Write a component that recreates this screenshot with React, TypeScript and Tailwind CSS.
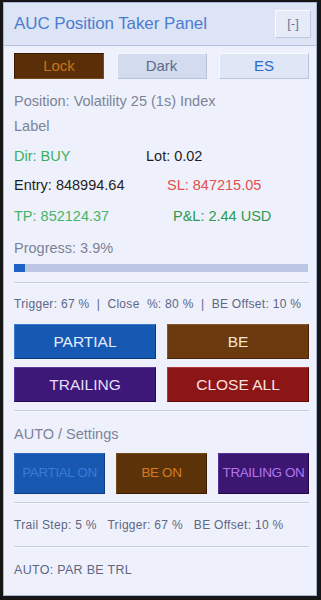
import React from "react";

const font = { fontFamily: '"Liberation Sans", Arial, sans-serif' };

function Sep() {
  return <div className="h-[2px] bg-[#c3cbe2] border-b border-[#f6f8fe]" />;
}

export default function App() {
  return (
    <div className="w-[321px] h-[600px] bg-[#161616] pt-[2px] pl-[3px] pr-[4px] pb-[4px]" style={font}>
      <div className="h-full bg-[#eef1fb] border border-[#aab6d6] flex flex-col">
        {/* header */}
        <div className="h-[43px] bg-[#dde4f5] border-b border-[#b3bfdc] flex items-center justify-between pl-[10px] pr-[5px]">
          <span className="text-[17px] text-[#4a7dd0] tracking-[-0.1px]">AUC Position Taker Panel</span>
          <div className="w-[36px] h-[28px] bg-[#e6ebf7] border border-t-[#f8faff] border-l-[#f8faff] border-r-[#c0c8de] border-b-[#c0c8de] flex items-center justify-center text-[13px] text-[#6a7896]">
            [-]
          </div>
        </div>

        <div className="pl-[10px] pr-[7px] flex flex-col">
          {/* top buttons */}
          <div className="flex justify-between mt-[7px]">
            <div className="w-[90px] h-[26px] bg-[#5a2e06] border border-t-[#3a1c02] border-l-[#3a1c02] border-r-[#7a4a1c] border-b-[#7a4a1c] flex items-center justify-center text-[15px] text-[#c8741e]">
              Lock
            </div>
            <div className="w-[90px] h-[26px] bg-[#d3dbee] border border-t-[#f4f6fd] border-l-[#f4f6fd] border-r-[#b8c2dc] border-b-[#b8c2dc] flex items-center justify-center text-[15px] text-[#5d6b89]">
              Dark
            </div>
            <div className="w-[90px] h-[26px] bg-[#dfe6f6] border border-t-[#f8faff] border-l-[#f8faff] border-r-[#bac4de] border-b-[#bac4de] flex items-center justify-center text-[15px] text-[#2d68c8]">
              ES
            </div>
          </div>

          {/* info */}
          <div className="mt-[14px] text-[14.5px] leading-[17px]">
            <div className="text-[#7c8398]">Position: Volatility 25 (1s) Index</div>
            <div className="text-[#7c8398] mt-[8px]">Label</div>
            <div className="flex mt-[13px]">
              <span className="w-[132px] text-[#3caf5c]">Dir: BUY</span>
              <span className="text-[#1e1e24]">Lot: 0.02</span>
            </div>
            <div className="flex mt-[12px]">
              <span className="w-[153px] text-[#1e1e24]">Entry: 848994.64</span>
              <span className="text-[#e0504e]">SL: 847215.05</span>
            </div>
            <div className="flex mt-[14px]">
              <span className="w-[159px] text-[#46b468]">TP: 852124.37</span>
              <span className="text-[#2d9a50]">P&amp;L: 2.44 USD</span>
            </div>
            <div className="text-[#7c8398] mt-[15px]">Progress: 3.9%</div>
          </div>

          {/* progress */}
          <div className="mt-[7px] h-[8px] bg-[#bcc6e3] w-[294px]">
            <div className="h-full bg-[#1f62c6]" style={{ width: "3.9%" }} />
          </div>

          <div className="mt-[10px]">
            <Sep />
          </div>

          <div className="mt-[13px] text-[12px] text-[#5d6684] leading-[14px] whitespace-pre tracking-[0.3px]">
            Trigger: 67 %  |  Close  %: 80 %  |  BE Offset: 10 %
          </div>

          {/* actions */}
          <div className="grid grid-cols-2 gap-x-[11px] gap-y-[8px] mt-[13px]">
            <div className="h-[35px] bg-[#1659b2] border border-t-[#3a7ad0] border-l-[#3a7ad0] border-r-[#0c3a7c] border-b-[#0c3a7c] flex items-center justify-center text-[15.5px] text-[#e4ecff]">
              PARTIAL
            </div>
            <div className="h-[35px] bg-[#6b3a0f] border border-t-[#8a5628] border-l-[#8a5628] border-r-[#4a2406] border-b-[#4a2406] flex items-center justify-center text-[15.5px] text-[#f4e6d8]">
              BE
            </div>
            <div className="h-[35px] bg-[#3d1878] border border-t-[#5a36a0] border-l-[#5a36a0] border-r-[#26084e] border-b-[#26084e] flex items-center justify-center text-[15.5px] text-[#e6ddff]">
              TRAILING
            </div>
            <div className="h-[35px] bg-[#8c1515] border border-t-[#b03838] border-l-[#b03838] border-r-[#5e0808] border-b-[#5e0808] flex items-center justify-center text-[15.5px] text-[#ffe0e0]">
              CLOSE ALL
            </div>
          </div>

          <div className="mt-[8px]">
            <Sep />
          </div>

          <div className="mt-[14px] text-[14.5px] leading-[17px] text-[#7c8398]">AUTO / Settings</div>

          {/* toggles */}
          <div className="flex justify-between mt-[10px]">
            <div className="w-[91px] h-[41px] bg-[#1858b0] border border-t-[#2c6ac4] border-l-[#2c6ac4] border-r-[#0e3c80] border-b-[#0e3c80] flex items-center justify-center text-[13.5px] text-[#3a7bd8] tracking-[-0.4px] whitespace-nowrap">
              PARTIAL ON
            </div>
            <div className="w-[91px] h-[41px] bg-[#5c3208] border border-t-[#764818] border-l-[#764818] border-r-[#3a1c02] border-b-[#3a1c02] flex items-center justify-center text-[13.5px] text-[#d27c22] tracking-[-0.4px] whitespace-nowrap">
              BE ON
            </div>
            <div className="w-[91px] h-[41px] bg-[#3b1772] border border-t-[#54309a] border-l-[#54309a] border-r-[#24084a] border-b-[#24084a] flex items-center justify-center text-[13.5px] text-[#b474f0] tracking-[-0.4px] whitespace-nowrap">
              TRAILING ON
            </div>
          </div>

          <div className="mt-[8px]">
            <Sep />
          </div>

          <div className="mt-[14px] text-[12px] text-[#5d6684] leading-[14px] whitespace-pre tracking-[0.3px]">
            Trail Step: 5 %   Trigger: 67 %   BE Offset: 10 %
          </div>

          <div className="mt-[14px]">
            <Sep />
          </div>

          <div className="mt-[15px] text-[12.5px] text-[#5d6684] leading-[14px] tracking-[0.3px]">AUTO: PAR BE TRL</div>
        </div>
      </div>
    </div>
  );
}
